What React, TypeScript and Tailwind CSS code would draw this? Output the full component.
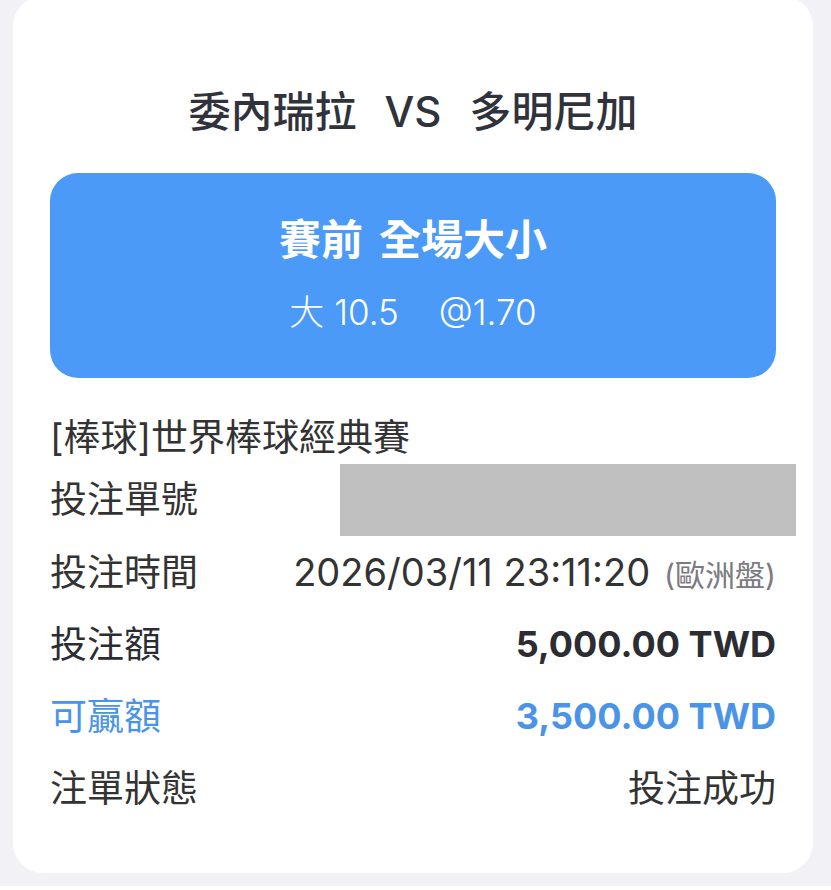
import React from "react";

const FONT = "font-['Inter','Noto_Sans_CJK_TC',sans-serif]";

const rows = [
  { label: "投注額", value: "5,000.00 TWD", blue: false },
  { label: "可贏額", value: "3,500.00 TWD", blue: true },
];

export default function App() {
  return (
    <div className={`min-h-[890px] w-[831px] bg-[#f1f1f6] ${FONT}`}>
      <div className="ml-[13px] mr-[18px] -mt-[4px] rounded-[30px] bg-white px-[37px] pt-[91px] pb-[49px]">
        {/* match title */}
        <div className="flex h-[50px] items-center justify-center gap-[28px] text-[42px] font-medium leading-none text-[#30333b]">
          <span>委內瑞拉</span>
          <span>VS</span>
          <span>多明尼加</span>
        </div>

        {/* market box */}
        <div className="mt-[36px] flex h-[205px] flex-col items-center rounded-[28px] bg-[#4b9af7] pt-[43px] text-white">
          <div className="flex h-[48px] items-center gap-[16px] text-[42px] font-bold leading-none">
            <span>賽前</span>
            <span>全場大小</span>
          </div>
          <div className="mt-[26px] flex h-[44px] items-center text-[35px] font-light leading-none">
            <span>大 10.5</span>
            <span className="ml-[40px]">@1.70</span>
          </div>
        </div>

        {/* league */}
        <div className="mt-[34px] flex h-[50px] items-center text-[37px] leading-none text-[#333]">
          [棒球]世界棒球經典賽
        </div>

        <div className="flex h-[74px] items-center justify-between text-[37px] leading-none text-[#333]">
          <span>投注單號</span>
          <div className="-mr-[20px] h-[72px] w-[456px] self-end bg-[#c0c0c0]" />
        </div>

        <div className="flex h-[72px] items-center justify-between text-[37px] leading-none text-[#333]">
          <span>投注時間</span>
          <div className="flex items-baseline">
            <span className="text-[38px]">2026/03/11 23:11:20</span>
            <span className="ml-[14px] text-[30px] text-[#7a7a80]">(歐洲盤)</span>
          </div>
        </div>

        {rows.map((r) => (
          <div
            key={r.label}
            className={`flex h-[72px] items-center justify-between leading-none ${
              r.blue ? "text-[#4a94e8]" : "text-[#2c2d33]"
            }`}
          >
            <span className="text-[37px]">{r.label}</span>
            <span className="text-[36px] font-bold">{r.value}</span>
          </div>
        ))}

        <div className="flex h-[72px] items-center justify-between text-[37px] leading-none text-[#333]">
          <span>注單狀態</span>
          <span>投注成功</span>
        </div>
      </div>
    </div>
  );
}
